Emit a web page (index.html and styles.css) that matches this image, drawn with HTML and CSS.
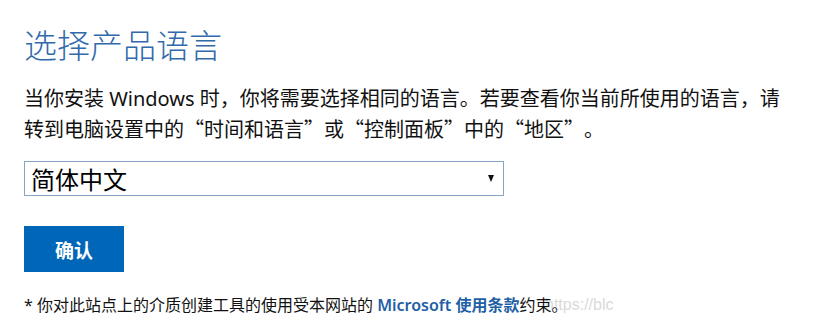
FILE: index.html
```html
<!DOCTYPE html>
<html lang="zh-CN">
<head>
<meta charset="utf-8">
<title>选择产品语言</title>
<link rel="stylesheet" href="styles.css">
</head>
<body>
<main class="page">
  <h1 class="title">选择产品语言</h1>
  <p class="intro">当你安装 Windows 时，你将需要选择相同的语言。若要查看你当前所使用的语言，请转到电脑设置中的<span class="q">“</span>时间和语言<span class="q">”</span>或<span class="q">“</span>控制面板<span class="q">”</span>中的<span class="q">“</span>地区<span class="q">”</span>。</p>
  <div class="select-wrap">
    <div class="select">简体中文</div>
    <span class="arrow"></span>
  </div>
  <button class="confirm" type="button">确认</button>
  <p class="footer"><span class="watermark">https://blc</span><span class="foot-text">* 你对此站点上的介质创建工具的使用受本网站的 <a class="terms" href="#">Microsoft 使用条款</a>约束。</span></p>
</main>
</body>
</html>
```
FILE: styles.css
```css
html, body {
  margin: 0;
  padding: 0;
  background: #ffffff;
}

body {
  font-family: "Noto Sans", "Noto Sans CJK SC", sans-serif;
  color: #111111;
}

.page {
  padding: 24px 24px 0 24px;
  display: flex;
  flex-direction: column;
  align-items: flex-start;
}

.title {
  margin: 0;
  font-family: "Noto Sans CJK SC", sans-serif;
  font-size: 33px;
  line-height: 40px;
  font-weight: 300;
  color: #3169ab;
}

.intro {
  margin: 20px 0 0 0;
  width: 770px;
  font-size: 20px;
  line-height: 30px;
  color: #111111;
  text-spacing-trim: space-all;
}

.q {
  font-family: "Noto Sans CJK SC", sans-serif;
}

.select-wrap {
  position: relative;
  margin-top: 16px;
}

.select {
  box-sizing: border-box;
  width: 480px;
  height: 35px;
  border: 1px solid #8aa4c8;
  padding: 0 6px;
  font-family: "Noto Sans CJK SC", sans-serif;
  font-size: 24px;
  line-height: 33px;
  color: #000000;
}

.arrow {
  position: absolute;
  right: 10px;
  top: 14px;
  width: 0;
  height: 0;
  border-left: 3.5px solid transparent;
  border-right: 3.5px solid transparent;
  border-top: 7px solid #111111;
}

.confirm {
  margin-top: 30px;
  width: 100px;
  height: 46px;
  border: none;
  background: #0067b8;
  color: #ffffff;
  font-family: "Noto Sans CJK SC", sans-serif;
  font-size: 19px;
  font-weight: 700;
  padding: 0;
}

.footer {
  position: relative;
  margin: 22px 0 0 0;
  font-size: 16px;
  line-height: 22px;
  color: #111111;
}

.foot-text {
  position: relative;
}

.terms {
  color: #1f5fa6;
  font-weight: 600;
  text-decoration: none;
}

.watermark {
  position: absolute;
  left: 521px;
  top: 0;
  color: #dadada;
  font-family: "Liberation Sans", sans-serif;
  font-size: 16px;
  line-height: 22px;
  white-space: nowrap;
}
```
